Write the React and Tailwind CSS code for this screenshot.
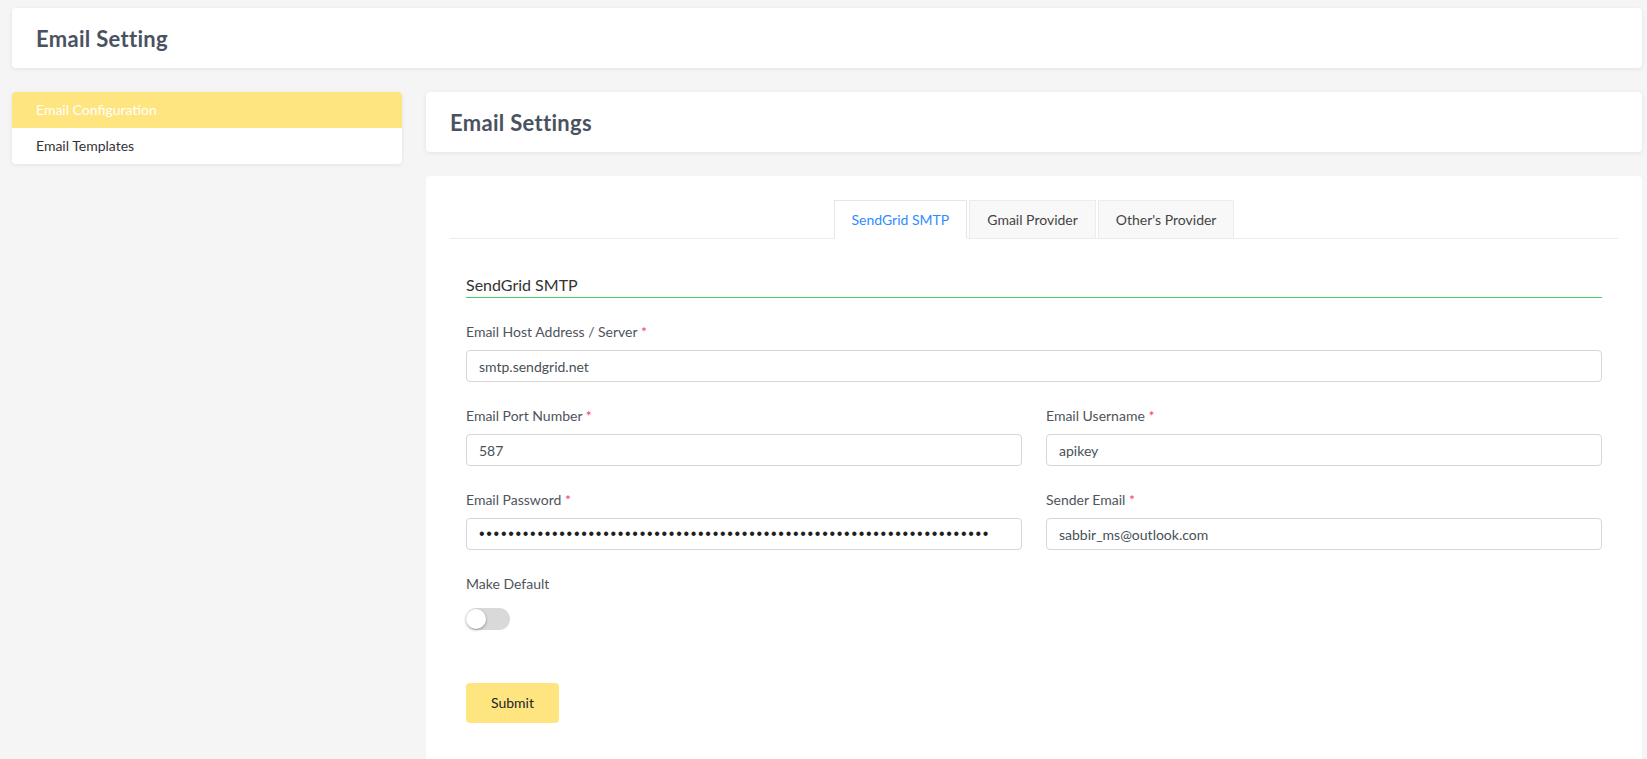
const Label = ({ children }) => (
  <label className="block text-sm leading-5 text-[#4f545c] mb-2">
    {children} <span className="text-[#f1416c]">*</span>
  </label>
);

const Field = ({ label, value, type = "text" }) => (
  <div>
    <Label>{label}</Label>
    <input
      type={type}
      readOnly
      value={value}
      className={
        type === "password"
          ? "block w-full h-8 border border-[#d6d6d6] rounded-sm px-3 text-base tracking-[1.7px] font-['Liberation_Sans',sans-serif] text-[#1f1f1f] bg-white outline-none"
          : "block w-full h-8 border border-[#d6d6d6] rounded-sm px-3 text-sm text-[#495057] bg-white outline-none"
      }
    />
  </div>
);

export default function App() {
  const pw = "SG.aBcDeFgHiJkLmNoPqRsTuV.wXyZ0123456789aBcDeFgHiJkLmNoPqRsTuVwXyZ0123";
  return (
    <div className="min-h-screen bg-[#f5f5f5] pl-3 pr-[5px] pt-2 font-['Lato',sans-serif]">
      <div className="h-[60px] bg-white rounded shadow-[0_1px_4px_rgba(0,0,0,0.08)] flex items-center px-6">
        <h1 className="text-[22px] tracking-[0.3px] font-bold text-[#4a5260]">Email Setting</h1>
      </div>
      <div className="mt-6 flex gap-6 items-start">
        <div className="w-[390px] shrink-0 bg-white rounded shadow-[0_1px_4px_rgba(0,0,0,0.08)] overflow-hidden">
          <div className="h-9 bg-[#fee580] text-white text-sm flex items-center px-6">Email Configuration</div>
          <div className="h-9 text-[#333] text-sm flex items-center px-6">Email Templates</div>
        </div>
        <div className="flex-1 flex flex-col gap-6">
          <div className="h-[60px] bg-white rounded shadow-[0_1px_4px_rgba(0,0,0,0.08)] flex items-center px-6">
            <h2 className="text-[22px] tracking-[0.3px] font-bold text-[#4a5260]">Email Settings</h2>
          </div>
          <div className="bg-white rounded-t px-6 pt-6 pb-12">
            <div className="flex justify-center border-b border-[#ececec]">
              <div className="flex gap-[2px] -mb-px">
                <div className="h-[39px] px-[17px] flex items-center text-sm text-[#2f8cff] bg-white border border-[#e6e6e6] border-b-white">SendGrid SMTP</div>
                <div className="h-[39px] px-[17px] flex items-center text-sm text-[#444] bg-[#f8f8f8] border border-[#ececec]">Gmail Provider</div>
                <div className="h-[39px] px-[17px] flex items-center text-sm text-[#444] bg-[#f8f8f8] border border-[#ececec]">Other's Provider</div>
              </div>
            </div>
            <div className="px-4">
              <div className="mt-[34px] text-base leading-6 text-[#333] border-b border-[#45cd68]">SendGrid SMTP</div>
              <div className="mt-6 grid grid-cols-2 gap-x-6 gap-y-6">
                <div className="col-span-2">
                  <Field label="Email Host Address / Server" value="smtp.sendgrid.net" />
                </div>
                <Field label="Email Port Number" value="587" />
                <Field label="Email Username" value="apikey" />
                <Field label="Email Password" value={pw} type="password" />
                <Field label="Sender Email" value="sabbir_ms@outlook.com" />
                <div className="col-span-2">
                  <div className="text-sm leading-5 text-[#4f545c]">Make Default</div>
                  <div className="mt-[14px] w-11 h-[22px] rounded-full bg-[#d9d9d9] relative">
                    <div className="absolute left-0 top-px w-5 h-5 rounded-full bg-white shadow-[0_1px_3px_rgba(0,0,0,0.35)]"></div>
                  </div>
                </div>
              </div>
              <button className="mt-[53px] w-[93px] h-10 rounded bg-[#fee580] text-sm text-[#212529]">Submit</button>
            </div>
          </div>
        </div>
      </div>
    </div>
  );
}
